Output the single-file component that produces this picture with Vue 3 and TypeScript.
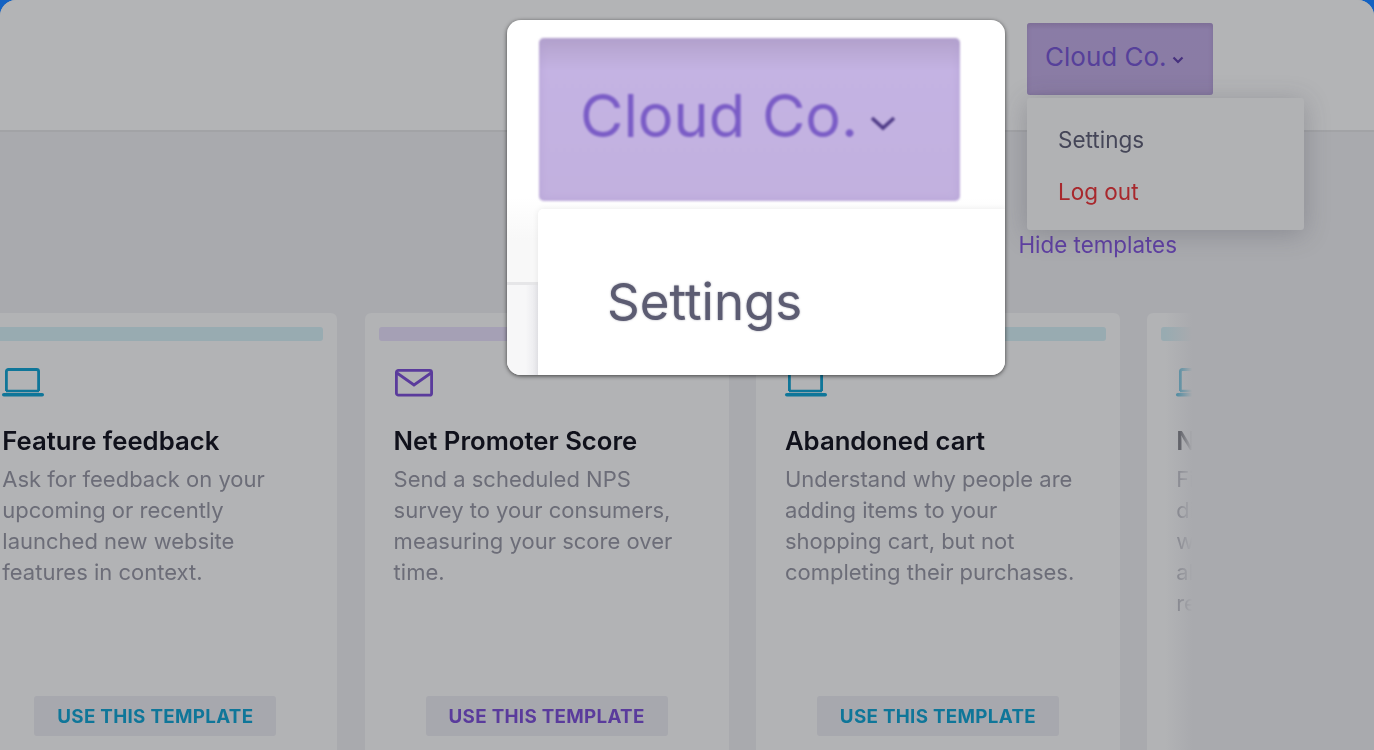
<script setup lang="ts">
interface Template {
  title: string
  lines: string[]
  tone: 'teal' | 'purple'
  icon: 'laptop' | 'mail'
  action?: string
}

const templates: Template[] = [
  {
    title: 'Feature feedback',
    lines: ['Ask for feedback on your', 'upcoming or recently', 'launched new website', 'features in context.'],
    tone: 'teal',
    icon: 'laptop',
    action: 'Use this template',
  },
  {
    title: 'Net Promoter Score',
    lines: ['Send a scheduled NPS', 'survey to your consumers,', 'measuring your score over', 'time.'],
    tone: 'purple',
    icon: 'mail',
    action: 'Use this template',
  },
  {
    title: 'Abandoned cart',
    lines: ['Understand why people are', 'adding items to your', 'shopping cart, but not', 'completing their purchases.'],
    tone: 'teal',
    icon: 'laptop',
    action: 'Use this template',
  },
  // last card is cut off by the fade, only these fragments can be read
  {
    title: 'N',
    lines: ['Fi', 'di', 'w', 'al', 're'],
    tone: 'teal',
    icon: 'laptop',
  },
]
</script>

<template>
  <div class="screen">
    <div class="window">
      <header class="topbar">
        <div class="account">
          <button class="account-btn">
            <span>Cloud Co.</span>
            <svg width="12" height="8" viewBox="0 0 12 8" fill="none">
              <path d="M1.500 1.500L6 6l4.500-4.500" stroke="#46307e" stroke-width="2.200" />
            </svg>
          </button>
          <div class="menu">
            <a class="menu-item">Settings</a>
            <a class="menu-item danger">Log out</a>
          </div>
        </div>
      </header>

      <main class="content">
        <div class="hide-row"><a class="hide-link">Hide templates</a></div>
        <div class="cards">
          <article v-for="item in templates" :key="item.title" class="card" :class="item.tone">
            <div class="stripe"></div>
            <svg v-if="item.icon === 'laptop'" class="icon" width="44" height="29" viewBox="0 0 44 29" fill="none">
              <path d="M5.400 23V3.500a2 2 0 0 1 2-2h28.200a2 2 0 0 1 2 2V23" stroke="currentColor" stroke-width="2.800" />
              <path d="M5 23h33" stroke="currentColor" stroke-width="2.400" />
              <path d="M2.800 26.700h38.400" stroke="currentColor" stroke-width="3.600" stroke-linecap="round" />
            </svg>
            <svg v-else class="icon" width="44" height="29" viewBox="0 0 44 29" fill="none">
              <rect x="3.400" y="2.400" width="35.200" height="24.800" rx="2" stroke="currentColor" stroke-width="2.800" />
              <path d="M4 5l17 12L38 5" stroke="currentColor" stroke-width="2.800" />
            </svg>
            <h3 class="card-title">{{ item.title }}</h3>
            <p class="card-desc">
              <span v-for="line in item.lines" :key="line">{{ line }}</span>
            </p>
            <button v-if="item.action" class="use-btn">{{ item.action }}</button>
          </article>
          <div class="fade"></div>
        </div>
      </main>
    </div>

    <div class="lens">
      <div class="lens-page"></div>
      <div class="lens-btn">
        <span>Cloud Co.</span>
        <svg width="26" height="16" viewBox="0 0 26 16" fill="none">
          <path d="M2 3l11 10L24 3" stroke="#4e3a86" stroke-width="3.600" />
        </svg>
      </div>
      <div class="lens-menu">Settings</div>
    </div>
  </div>
</template>

<style>
html,
body {
  margin: 0;
  background: #1462c2;
}
</style>

<style scoped>
.screen {
  position: relative;
  width: 1374px;
  height: 750px;
  overflow: hidden;
  background: #1462c2;
  font-family: Inter, 'Liberation Sans', sans-serif;
}

.window {
  height: 100%;
  display: flex;
  flex-direction: column;
  overflow: hidden;
  border-radius: 16px 16px 0 0;
  background: #a9aaae;
  filter: blur(0.7px);
}

.topbar {
  flex: none;
  box-sizing: border-box;
  height: 132px;
  padding: 23px 161px 0 0;
  display: flex;
  justify-content: flex-end;
  background: #b3b4b6;
  border-bottom: 2px solid #a2a3a6;
}

.account {
  position: relative;
  width: 186px;
}

.account-btn {
  box-sizing: border-box;
  width: 186px;
  height: 72px;
  padding: 0 0 6px 18px;
  display: flex;
  align-items: center;
  gap: 5px;
  border: 0;
  border-radius: 3px;
  background: linear-gradient(#82729b, #8a7ca6 10%, #8a7ca4);
  box-shadow: inset 0 0 4px rgba(120, 106, 148, 0.8);
  color: #56409a;
  font: 400 26px Inter, 'Liberation Sans', sans-serif;
}

.account-btn svg {
  margin-top: 7px;
}

.menu {
  position: absolute;
  z-index: 2;
  top: 75px;
  left: 0;
  box-sizing: border-box;
  width: 277px;
  height: 132px;
  padding: 28px 0 0 31px;
  display: flex;
  flex-direction: column;
  gap: 24px;
  border-radius: 3px;
  background: #b1b2b4;
  box-shadow: 0 4px 26px rgba(60, 60, 75, 0.28);
}

.menu-item {
  font-size: 22.500px;
  line-height: 28px;
  color: #454658;
}

.menu-item.danger {
  color: #a8282d;
}

.content {
  flex: 1;
  min-height: 0;
  display: flex;
  flex-direction: column;
}

.hide-row {
  flex: none;
  height: 181px;
  padding: 99px 197px 0 0;
  box-sizing: border-box;
  display: flex;
  justify-content: flex-end;
}

.hide-link {
  font-size: 22.400px;
  line-height: 28px;
  color: #5f40a2;
}

.cards {
  position: relative;
  display: flex;
  gap: 27.300px;
  margin-left: -26.700px;
}

.card {
  flex: none;
  box-sizing: border-box;
  width: 364px;
  height: 470px;
  padding: 14px 14px 47px 29px;
  display: flex;
  flex-direction: column;
  border-radius: 6px;
  background: #b2b3b5;
}

.card.teal {
  color: #0f7699;
}

.card.purple {
  color: #5a3b9c;
}

.stripe {
  height: 14px;
  margin: 0 0 27px -15px;
  border-radius: 3px;
}

.teal .stripe {
  background: #98abb1;
}

.purple .stripe {
  background: #a5a0b5;
}

.icon {
  flex: none;
  margin-left: -1px;
  color: inherit;
}

.card-title {
  margin: 28px 0 0;
  font-size: 25.700px;
  line-height: 32px;
  font-weight: 600;
  color: #10111b;
}

.card-desc {
  margin: 7px 0 0;
  font-size: 22px;
  line-height: 31px;
  color: #6c6d78;
}

.card-desc span {
  display: block;
  white-space: nowrap;
}

.use-btn {
  align-self: flex-start;
  box-sizing: border-box;
  width: 242px;
  height: 40px;
  margin: auto 0 0 32px;
  padding: 0;
  border: 0;
  border-radius: 3px;
  background: #a7a8ae;
  color: inherit;
  font: 700 18.800px Inter, 'Liberation Sans', sans-serif;
  letter-spacing: 0.3px;
  text-transform: uppercase;
}

/* rail fades out before the window edge */
.fade {
  position: absolute;
  top: 0;
  bottom: 0;
  left: 1192px;
  width: 209px;
  background: linear-gradient(90deg, rgba(169, 170, 174, 0), #a9aaae 13%);
}

.lens {
  position: absolute;
  z-index: 5;
  top: 20px;
  left: 507px;
  box-sizing: border-box;
  width: 498px;
  height: 355px;
  padding: 18px 0 0 32px;
  overflow: hidden;
  border-radius: 14px;
  background: linear-gradient(#fff 50%, #f8f8f8 62%);
  box-shadow: 0 1px 4px rgba(0, 0, 0, 0.65);
}

.lens-page {
  position: absolute;
  top: 262px;
  bottom: 0;
  left: 0;
  width: 31px;
  border-top: 3px solid #e6e6e8;
  background: linear-gradient(90deg, #f7f7f8 60%, #e8e8ec);
}

.lens-btn {
  box-sizing: border-box;
  width: 421px;
  height: 163px;
  padding: 0 0 10px 41px;
  display: flex;
  align-items: center;
  gap: 12px;
  border-radius: 5px;
  background: linear-gradient(#b3a2cc, #c4b3e3 20%, #c2b1df);
  box-shadow: inset 0 0 8px rgba(175, 155, 208, 0.6);
  color: #7a5cc6;
  font-size: 59.500px;
  filter: blur(0.8px);
}

.lens-btn svg {
  margin-top: 16px;
}

.lens-menu {
  position: relative;
  box-sizing: border-box;
  height: 180px;
  margin: 8px 0 0 -1px;
  padding: 63px 0 0 69px;
  border-radius: 5px 0 0 0;
  background: #fff;
  box-shadow: 0 0 6px rgba(0, 0, 0, 0.08);
  color: #5c5c72;
  font-size: 51px;
  line-height: 60px;
  text-shadow: 0 0 2px rgba(92, 92, 114, 0.6);
}
</style>
